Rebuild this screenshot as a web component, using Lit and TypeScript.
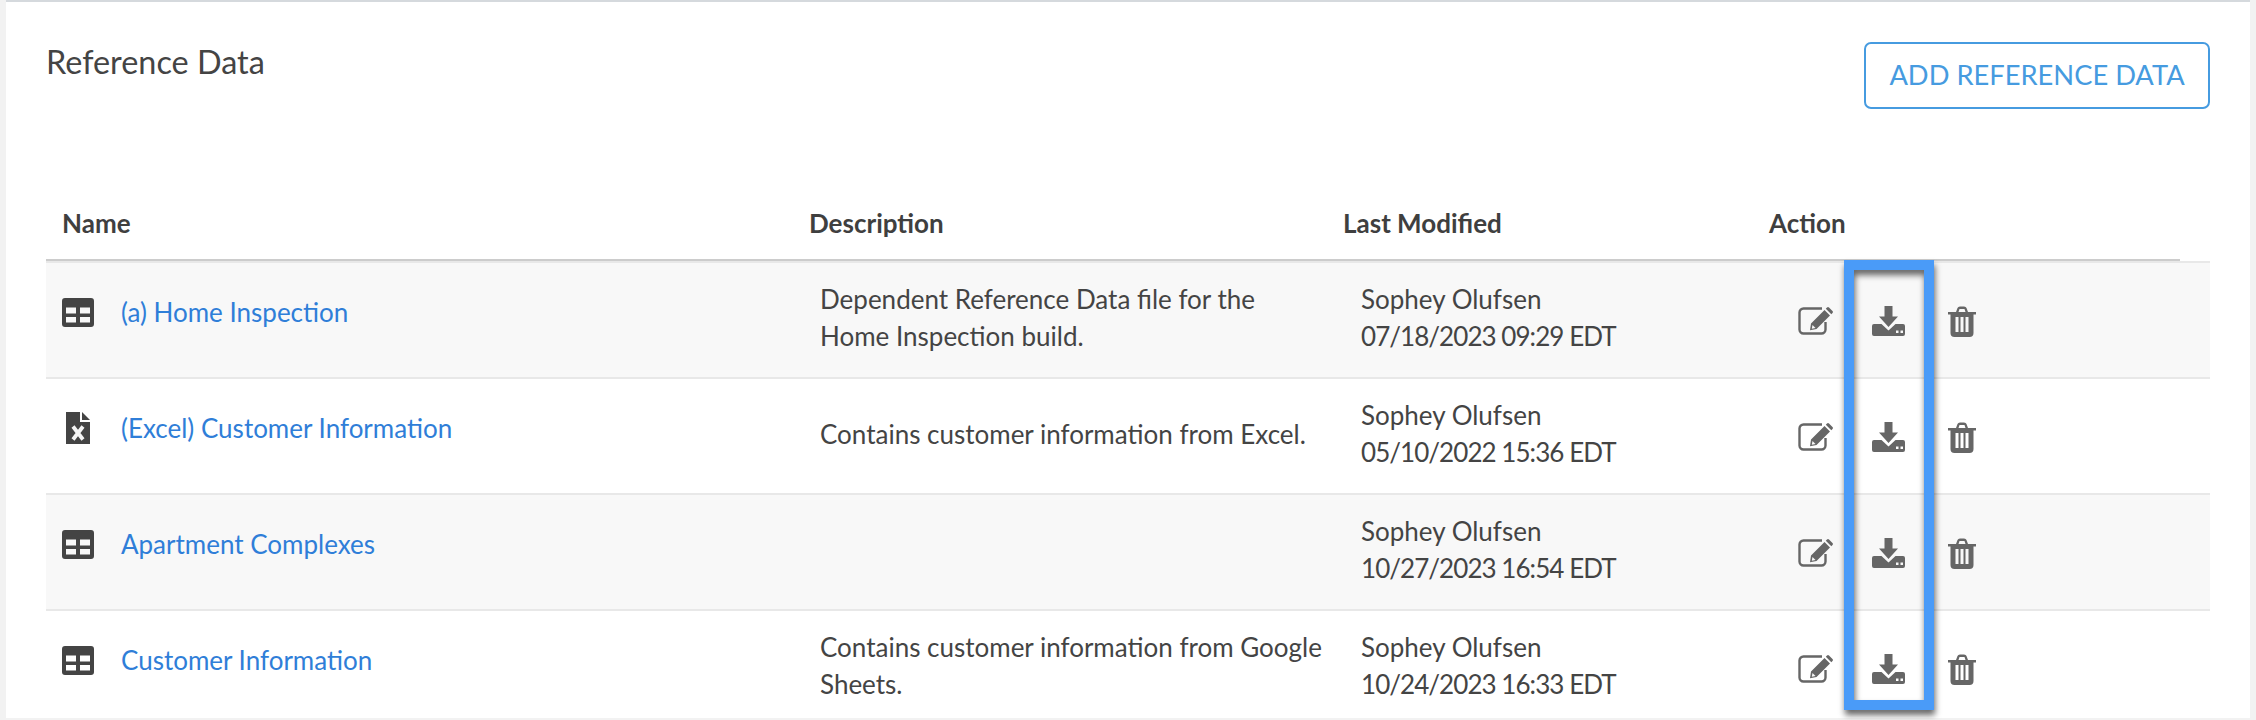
import { LitElement, html, css } from "lit";
import { customElement } from "lit/decorators.js";

const tableIcon = html`<svg class="ico-table" width="32" height="29" viewBox="0 0 32 29"><path fill="#444" fill-rule="evenodd" d="M3 0h26a3 3 0 0 1 3 3v23a3 3 0 0 1-3 3H3a3 3 0 0 1-3-3V3a3 3 0 0 1 3-3zM4 9.500v6h10v-6zM18 9.500v6h10v-6zM4 19v5.500h10V19zM18 19v5.500h10V19z"/></svg>`;
const fileIcon = html`<svg class="ico-file" width="24" height="32" viewBox="0 0 24 32"><path fill="#444" d="M0 0h14v10h10v22H0z"/><path fill="#444" d="M16 0l8 8h-8z"/><path stroke="#f4f4f4" stroke-width="3.800" fill="none" d="M7 14.500l10 13M17 14.500l-10 13"/></svg>`;
const editIcon = html`<svg width="35" height="28" viewBox="0 0 35 28"><path fill="none" stroke="#666" stroke-width="2.400" d="M24 1.500H5.500a4 4 0 0 0-4 4v17a4 4 0 0 0 4 4h18a4 4 0 0 0 4-4V15"/><path fill="#666" d="M13 16.500L26.500 3l5.500 5.500L18.500 22l-6.500 1.200zM27.800 1.700l1.200-1.200a1.500 1.500 0 0 1 2 0l3.500 3.500a1.500 1.500 0 0 1 0 2l-1.200 1.200z"/><path fill="#f8f8f8" d="M14.500 18l3 3-3.700.7z"/></svg>`;
const downloadIcon = html`<svg width="33" height="30" viewBox="0 0 33 30"><path fill="#666" d="M12.500 0h8v10.500H26L16.500 21 7 10.500h5.500z"/><path fill="#666" fill-rule="evenodd" d="M2 18h7.500l7 6.500 7-6.500H31a2 2 0 0 1 2 2v8a2 2 0 0 1-2 2H2a2 2 0 0 1-2-2v-8a2 2 0 0 1 2-2zM24 24.500v2.500h2.500v-2.500zM28.500 24.500v2.500H31v-2.500z"/></svg>`;
const trashIcon = html`<svg class="trash" width="28" height="31" viewBox="0 0 28 31"><path fill="#666" fill-rule="evenodd" d="M0 6h8l1.500-4Q10 0.500 12 0.500h4q2 0 2.500 1.500L20 6h8v2.500h-2.500V27a4 4 0 0 1-4 4h-15a4 4 0 0 1-4-4V8.500H0zM10.500 6h7l-1-3h-5zM7.500 11v15h3V11zM12.500 11v15h3V11zM17.500 11v15h3V11z"/></svg>`;

const rows = [
  { icon: tableIcon, name: "(a) Home Inspection", desc: "Dependent Reference Data file for the Home Inspection build.", who: "Sophey Olufsen", when: "07/18/2023 09:29 EDT" },
  { icon: fileIcon, name: "(Excel) Customer Information", desc: "Contains customer information from Excel.", who: "Sophey Olufsen", when: "05/10/2022 15:36 EDT" },
  { icon: tableIcon, name: "Apartment Complexes", desc: "", who: "Sophey Olufsen", when: "10/27/2023 16:54 EDT" },
  { icon: tableIcon, name: "Customer Information", desc: "Contains customer information from Google Sheets.", who: "Sophey Olufsen", when: "10/24/2023 16:33 EDT" },
];

@customElement("app-root")
export class AppRoot extends LitElement {
  static styles = css`
    :host {
      display: block;
      position: relative;
      height: 720px;
      overflow: hidden;
      background: #f2f2f2;
      font-family: Lato, "Liberation Sans", sans-serif;
      color: #444;
    }
    .card {
      margin: 0 6px;
      height: 718px;
      background: #fff;
      border-top: 2px solid #d5d9dd;
      padding: 40px 40px 0;
      box-sizing: border-box;
    }
    .top {
      display: flex;
      justify-content: space-between;
      align-items: flex-start;
      height: 150px;
    }
    h1 {
      margin: 0;
      font-size: 32.400px;
      font-weight: 400;
      line-height: 40px;
      color: #444;
    }
    button {
      width: 346px;
      height: 67px;
      background: #fff;
      border: 2px solid #469be0;
      border-radius: 7px;
      color: #469be0;
      font: 400 27.300px Lato, sans-serif;
      padding: 0 0 3px;
    }
    .grid {
      display: grid;
      grid-template-columns: 747px 534px 426px 1fr;
    }
    .head {
      height: 67px;
      width: 2134px;
      border-bottom: 2px solid #ccc;
      align-items: center;
      font-weight: 700;
      font-size: 26px;
      color: #3f3f3f;
    }
    .head div { padding-left: 16px; padding-bottom: 6px; }
    .rows { border-top: 2px solid #e8e8e8; }
    .row {
      height: 114px;
      border-bottom: 2px solid #e8e8e8;
      align-items: center;
      font-size: 26px;
      line-height: 37px;
    }
    .row:nth-child(odd) { background: #f8f8f8; }
    .name {
      display: flex;
      align-items: center;
      gap: 27px;
      padding-left: 16px;
      padding-bottom: 16px;
    }
    .slot { width: 32px; display: flex; justify-content: center; flex: none; }
    .ico-table { display: block; }
    .name a { color: #2f7ed8; text-decoration: none; }
    .desc { padding-left: 27px; padding-bottom: 4px; }
    .mod { padding-left: 34px; padding-bottom: 4px; }
    .when { letter-spacing: -0.95px; }
    .acts { display: flex; align-items: center; gap: 39px; padding-left: 45px; padding-top: 2px; }
    .acts svg { display: block; }
    .acts .trash { margin-left: 4px; }
    .mark {
      position: absolute;
      left: 1844px;
      top: 260px;
      width: 90px;
      height: 450px;
      box-sizing: border-box;
      border: 10px solid #4a9bf8;
      filter: drop-shadow(1px 5px 3px rgba(0, 0, 0, 0.6));
    }
  `;

  render() {
    return html`
      <div class="card">
        <div class="top">
          <h1>Reference Data</h1>
          <button>ADD REFERENCE DATA</button>
        </div>
        <div class="grid head">
          <div>Name</div><div>Description</div><div>Last Modified</div><div>Action</div>
        </div>
        <div class="rows">
          ${rows.map(
            (r) => html`
              <div class="grid row">
                <div class="name"><span class="slot">${r.icon}</span><a href="#">${r.name}</a></div>
                <div class="desc">${r.desc}</div>
                <div class="mod">${r.who}<br /><span class="when">${r.when}</span></div>
                <div class="acts">${editIcon}${downloadIcon}${trashIcon}</div>
              </div>
            `
          )}
        </div>
      </div>
      <div class="mark"></div>
    `;
  }
}
